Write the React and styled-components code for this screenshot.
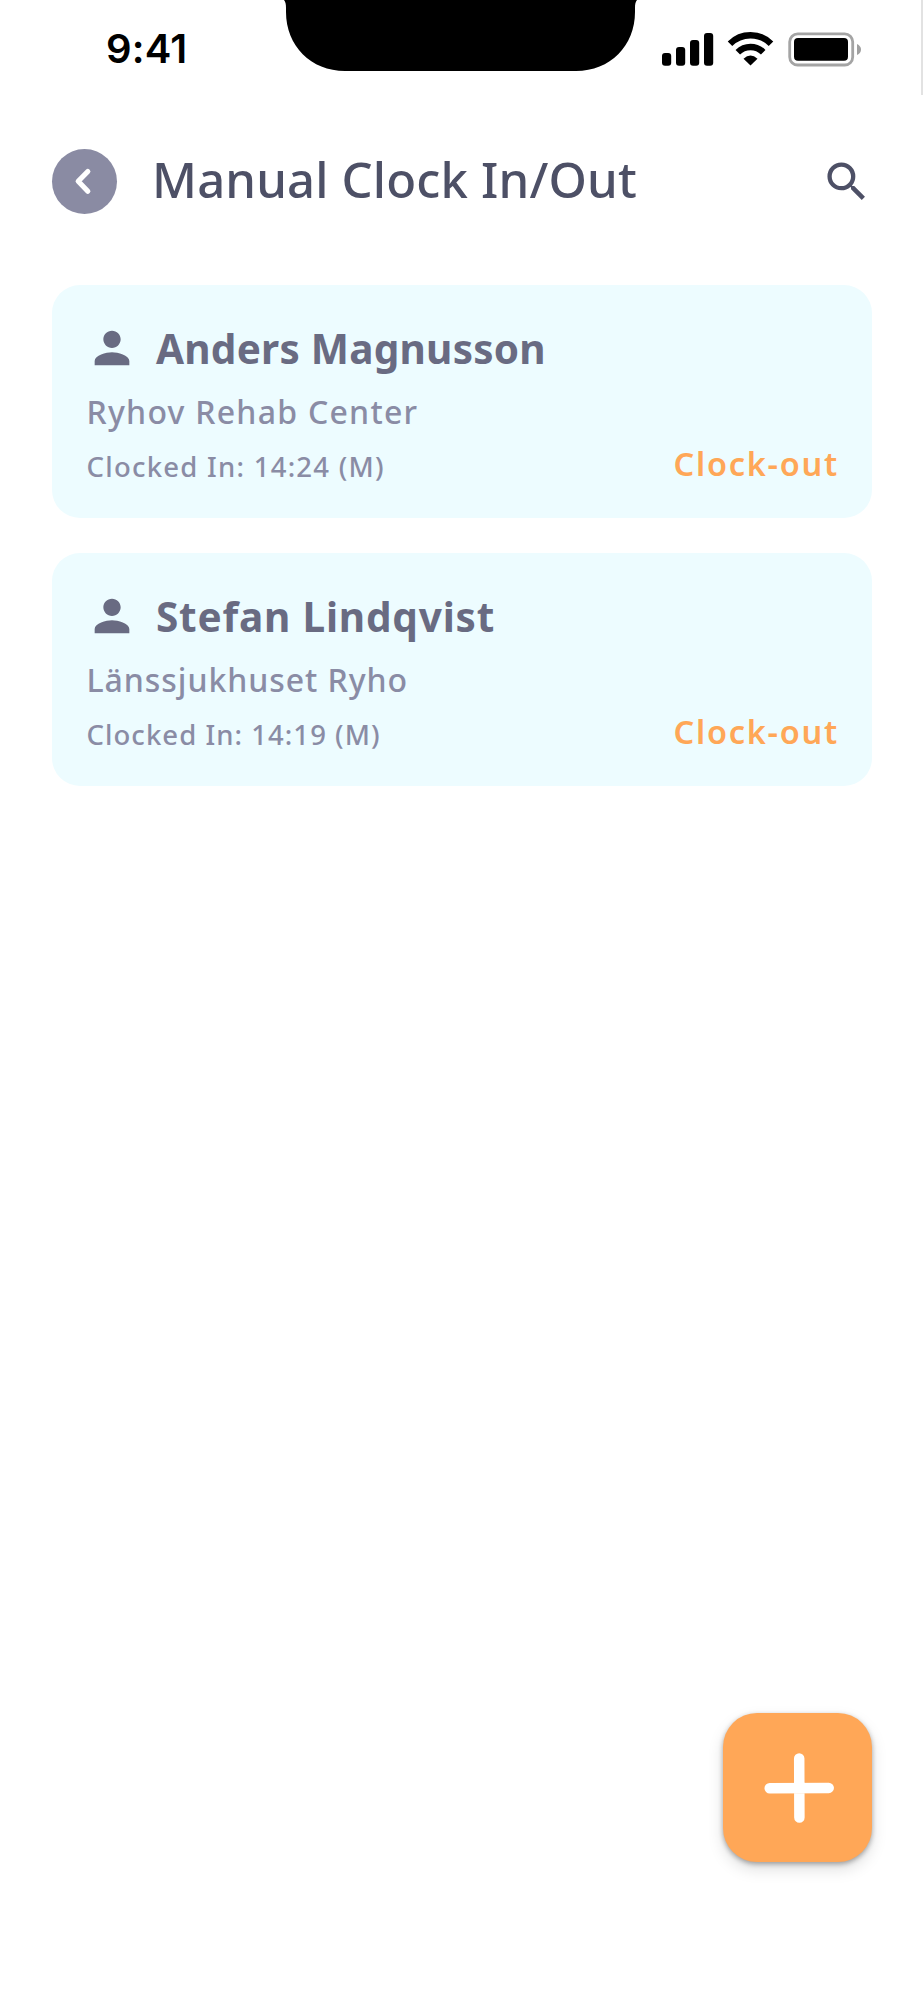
import styled, { createGlobalStyle } from "styled-components";
import { MdPerson, MdSearch } from "react-icons/md";

const Colors = {
  Background: "#fff",
  Card: "#edfcff",
  Heading: "#4d5066",
  Name: "#696b82",
  Muted: "#8a8ca5",
  Back: "#8a8ba3",
  Accent: "#ffa757",
};

const GlobalStyle = createGlobalStyle`
  * {
    box-sizing: border-box;
  }
  body {
    margin: 0;
    background: ${Colors.Background};
    font-family: "Noto Sans", "Open Sans", sans-serif;
  }
  button {
    border: 0;
    padding: 0;
    background: none;
    font-family: inherit;
    cursor: pointer;
  }
  svg {
    display: block;
    flex: none;
  }
`;

const Screen = styled.div`
  display: flex;
  flex-direction: column;
  width: 924px;
  height: 2000px;
  background: ${Colors.Background};
`;

const StatusBar = styled.div`
  display: flex;
  justify-content: space-between;
  width: 923px;
  height: 95px;
  border-right: 2px solid #e2e2e2;
`;

const Time = styled.span`
  width: 284px;
  padding-left: 106px;
  font-family: Inter, sans-serif;
  font-size: 40px;
  font-weight: 600;
  line-height: 98px;
  letter-spacing: 0.2px;
  color: #000;
`;

const StatusIcons = styled.div`
  display: flex;
  width: 284px;
  padding: 32px 0 0 25px;
`;

const Header = styled.header`
  display: flex;
  align-items: center;
  height: 65px;
  margin-top: 54px;
  padding: 0 52px;
`;

const BackButton = styled.button`
  display: flex;
  align-items: center;
  justify-content: center;
  width: 65px;
  height: 65px;
  border-radius: 50%;
  background: ${Colors.Back};
`;

const Title = styled.h1`
  flex: 1;
  margin: 0;
  padding: 0 0 6px 35px;
  font-size: 49px;
  font-weight: 500;
  line-height: 60px;
  letter-spacing: 0.16px;
  white-space: nowrap;
  color: ${Colors.Heading};
`;

const SearchButton = styled.button`
  color: ${Colors.Heading};
`;

const List = styled.main`
  display: flex;
  flex: 1;
  flex-direction: column;
  row-gap: 35px;
  padding: 71px 52px 0;
`;

const Card = styled.article`
  display: flex;
  align-items: flex-end;
  justify-content: space-between;
  height: 233px;
  padding: 36px 33px 35px 34.5px;
  border-radius: 28px;
  background: ${Colors.Card};
`;

const Details = styled.div`
  display: flex;
  flex-direction: column;
  white-space: nowrap;
`;

const NameRow = styled.div`
  display: flex;
  column-gap: 18px;
  height: 53px;
  margin-bottom: 19px;
  margin-left: -0.5px;
  color: ${Colors.Name};
`;

const Name = styled.h2`
  margin: 0;
  padding-top: 1px;
  font-size: 40.5px;
  font-weight: 700;
  line-height: 52px;
  letter-spacing: ${(p) => p.$spacing}px;
`;

const Place = styled.span`
  margin-bottom: 21px;
  font-size: 32px;
  font-weight: 500;
  line-height: 36px;
  letter-spacing: ${(p) => p.$spacing}px;
  color: ${Colors.Muted};
`;

const Clocked = styled.span`
  font-size: 27.5px;
  font-weight: 500;
  line-height: 32px;
  letter-spacing: ${(p) => p.$spacing}px;
  color: ${Colors.Muted};
`;

const ClockOut = styled.button`
  padding-bottom: 1px;
  font-size: 32.5px;
  font-weight: 600;
  line-height: 37px;
  letter-spacing: 1.75px;
  white-space: nowrap;
  color: ${Colors.Accent};
`;

const Footer = styled.footer`
  display: flex;
  justify-content: flex-end;
  padding: 0 52px 138.5px;
`;

const AddButton = styled.button`
  display: flex;
  align-items: center;
  justify-content: center;
  width: 149px;
  height: 149px;
  border-radius: 34px;
  background: ${Colors.Accent};
  box-shadow: 0 2px 5px rgba(0, 0, 0, 0.32), 0 7px 16px rgba(0, 0, 0, 0.13);
`;

const shifts = [
  {
    name: "Anders Magnusson",
    place: "Ryhov Rehab Center",
    time: "14:24 (M)",
    spacing: [0.24, 1.25, 1.25],
  },
  {
    name: "Stefan Lindqvist",
    place: "Länssjukhuset Ryho",
    time: "14:19 (M)",
    spacing: [0.8, 0.95, 1.05],
  },
];

const Notch = () => (
  <svg width="353" height="72" viewBox="0 0 353 72">
    <path d="M0 0C1.500 2 2 4 2 8V12C2 46 27 71 61 71H292C326 71 351 46 351 12V8C351 4 351.500 2 353 0Z" />
  </svg>
);

const StatusGlyphs = () => (
  <svg width="202" height="36" viewBox="0 0 202 36">
    <rect x="0" y="21" width="9.200" height="12.700" rx="3" />
    <rect x="14" y="15" width="9.200" height="18.700" rx="3" />
    <rect x="28" y="8" width="9.200" height="25.700" rx="3" />
    <rect x="42" y="1" width="9.200" height="32.700" rx="3" />
    <g fill="none" stroke="#000">
      <path d="M68 11.700A29 29 0 0 1 109 11.700" strokeWidth="6.400" />
      <path d="M75.800 20.200A18 18 0 0 1 101.200 20.200" strokeWidth="6.400" />
    </g>
    <path d="M81.500 26.800Q88.500 20 95.500 26.800L88.500 33.500Z" />
    <rect
      x="127.700"
      y="1.800"
      width="63"
      height="31.200"
      rx="8"
      fill="none"
      stroke="#a4a4a4"
      strokeWidth="2.800"
    />
    <rect x="132" y="6" width="54" height="22.700" rx="4" />
    <path d="M195 12Q199 14 199 17.500T195 23Z" fill="#a0a0a0" />
  </svg>
);

const ShiftCard = ({ shift }) => {
  const [nameGap, placeGap, timeGap] = shift.spacing;
  return (
    <Card>
      <Details>
        <NameRow>
          <MdPerson size={52} />
          <Name $spacing={nameGap}>{shift.name}</Name>
        </NameRow>
        <Place $spacing={placeGap}>{shift.place}</Place>
        <Clocked $spacing={timeGap}>Clocked In: {shift.time}</Clocked>
      </Details>
      <ClockOut>Clock-out</ClockOut>
    </Card>
  );
};

const App = () => {
  return (
    <>
      <GlobalStyle />
      <Screen>
        <StatusBar>
          <Time>9:41</Time>
          <Notch />
          <StatusIcons>
            <StatusGlyphs />
          </StatusIcons>
        </StatusBar>
        <Header>
          <BackButton aria-label="Back">
            <svg width="65" height="65" viewBox="0 0 65 65">
              <path
                d="M35.800 22.500L26.200 32.300L35.800 42.200"
                fill="none"
                stroke="#fff"
                strokeWidth="5.200"
                strokeLinecap="round"
                strokeLinejoin="round"
              />
            </svg>
          </BackButton>
          <Title>Manual Clock In/Out</Title>
          <SearchButton aria-label="Search">
            <MdSearch size={51.5} />
          </SearchButton>
        </Header>
        <List>
          {shifts.map((shift) => (
            <ShiftCard key={shift.name} shift={shift} />
          ))}
        </List>
        <Footer>
          <AddButton aria-label="Add">
            <svg width="72" height="72" viewBox="0 0 72 72">
              <path
                d="M37.200 7.500L37.400 66.500M7.700 37.300L66.700 36.900"
                stroke="#fff"
                strokeWidth="10.500"
                strokeLinecap="round"
              />
            </svg>
          </AddButton>
        </Footer>
      </Screen>
    </>
  );
};

export default App;
